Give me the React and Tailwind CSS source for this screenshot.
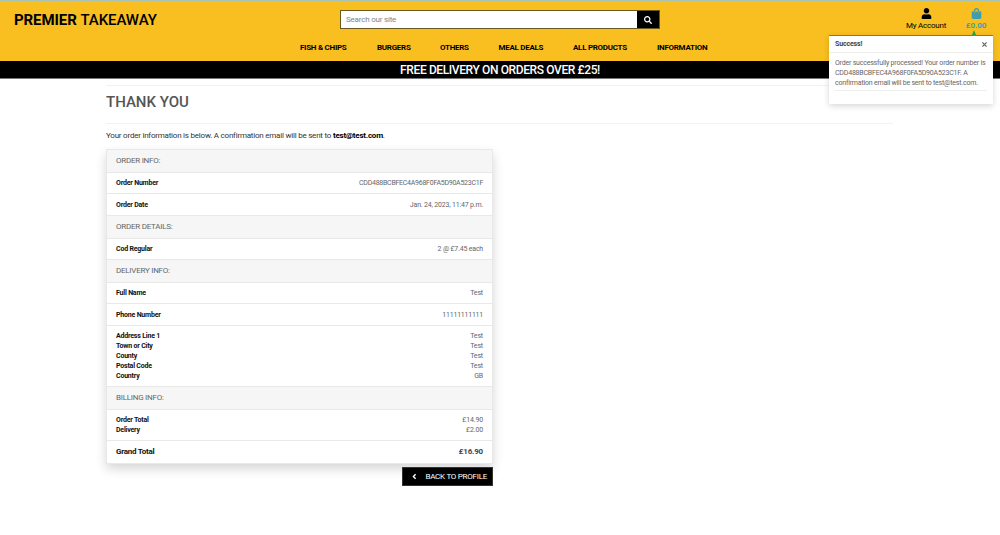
import React from "react";
import { FaUser, FaShoppingBag, FaSearch, FaChevronLeft } from "react-icons/fa";

const NAV = [
  ["FISH & CHIPS", "w-[77px]"],
  ["BURGERS", "w-[63px]"],
  ["OTHERS", "w-[58.5px]"],
  ["MEAL DEALS", "w-[74.5px]"],
  ["ALL PRODUCTS", "w-[84px]"],
  ["INFORMATION", "w-[50px]"],
];

function Header({ children }) {
  return (
    <div className="flex h-[23px] items-center border-b border-[#e8e8e8] bg-[#f6f6f6] px-[9px] text-[8px] tracking-[-0.25px] text-[#666]">
      {children}
    </div>
  );
}

function Rows({ items, className }) {
  return (
    <div className={`flex flex-col justify-center border-b border-[#e8e8e8] px-[9px] ${className}`}>
      {items.map(([label, value, tracking = "tracking-[-0.15px]"]) => (
        <div key={label} className="flex h-[9.9px] items-center justify-between text-[7px]">
          <span className="font-bold tracking-[-0.2px] text-[#111]">{label}</span>
          <span className={`text-[#666] ${tracking}`}>{value}</span>
        </div>
      ))}
    </div>
  );
}

export default function App() {
  return (
    <div className="relative h-[535px] w-[1000px] overflow-hidden whitespace-nowrap bg-white font-['Roboto',sans-serif] text-black">
      <header className="h-[61px] border-t border-[#a9c3b4] bg-[#f9bf20]">
        <div className="flex h-[34px] items-start">
          <div className="w-[340px] pl-[14px] pt-[10px] text-[15px] leading-[18px] tracking-[-0.08px]">
            <span className="font-bold">PREMIER</span> <span className="font-medium">TAKEAWAY</span>
          </div>
          <div className="mt-[9px] flex h-[19px] w-[320px] border border-[#6b5a20]">
            <div className="flex flex-1 items-center bg-white pl-[5px] text-[8px] tracking-[-0.2px] text-[#7d858c]">Search our site</div>
            <div className="flex w-[22px] items-center justify-center bg-black text-white">
              <FaSearch size={8} />
            </div>
          </div>
          <div className="ml-auto flex pt-[7px] text-[8px] tracking-[-0.22px]">
            <div className="flex w-[60px] flex-col items-center">
              <FaUser size={11} />
              <span className="mt-[1px] leading-[11px]">My Account</span>
            </div>
            <div className="mr-[4px] flex w-[40px] flex-col items-center text-[#3a9fb5]">
              <FaShoppingBag size={11} />
              <span className="mt-[1px] font-bold leading-[11px] tracking-[-0.1px]">£0.00</span>
            </div>
          </div>
        </div>
        <nav className="ml-[300px] flex h-[26px] items-center text-[8px] font-bold tracking-[-0.28px]">
          {NAV.map(([label, width]) => (
            <span key={label} className={`shrink-0 ${width}`}>{label}</span>
          ))}
        </nav>
      </header>
      <div className="flex h-[18px] items-center justify-center border-b border-[#777] bg-black text-[12px] font-medium leading-[16px] tracking-[-0.38px] text-white">
        FREE DELIVERY ON ORDERS OVER £25!
      </div>
      <main className="ml-[106px] w-[787px] pt-[6px]">
        <div className="flex h-[39px] items-center border-y border-[#f2f2f2] pb-[4px] text-[15px] font-medium text-[#555]">
          THANK YOU
        </div>
        <p className="mt-[6px] h-[12px] text-[8px] leading-[12px] tracking-[-0.22px] text-[#333]">
          Your order information is below. A confirmation email will be sent to <b className="text-black">test@test.com</b>.
        </p>
        <section className="mt-[7px] w-[387px] border-x border-t border-[#e8e8e8] shadow-[0_5px_10px_rgba(0,0,0,0.16)]">
          <Header>ORDER INFO:</Header>
          <Rows className="h-[21px] pt-[1px]" items={[["Order Number", "CDD488BCBFEC4A968F0FA5D90A523C1F", "tracking-[-0.26px]"]]} />
          <Rows className="h-[22px] pt-[1px]" items={[["Order Date", "Jan. 24, 2023, 11:47 p.m.", "tracking-[-0.19px]"]]} />
          <Header>ORDER DETAILS:</Header>
          <Rows className="h-[21px] pt-[1px]" items={[["Cod Regular", "2 @ £7.45 each", "tracking-[-0.2px]"]]} />
          <Header>DELIVERY INFO:</Header>
          <Rows className="h-[21px] pt-[1px]" items={[["Full Name", "Test"]]} />
          <Rows className="h-[22px] pt-[1px]" items={[["Phone Number", "11111111111", "tracking-[-0.24px]"]]} />
          <Rows
            className="h-[61px]"
            items={[["Address Line 1", "Test"], ["Town or City", "Test"], ["County", "Test"], ["Postal Code", "Test"], ["Country", "GB"]]}
          />
          <Header>BILLING INFO:</Header>
          <Rows className="h-[31px]" items={[["Order Total", "£14.90"], ["Delivery", "£2.00"]]} />
          <div className="flex h-[23px] items-center justify-between border-b border-[#e8e8e8] px-[9px] text-[8px] font-bold">
            <span className="tracking-[-0.25px] text-[#111]">Grand Total</span>
            <span className="tracking-[-0.2px] text-[#444]">£16.90</span>
          </div>
        </section>
        <button className="ml-[296px] mt-[3px] flex h-[19px] w-[91px] items-center justify-between border border-[#333] bg-black pl-[8px] pr-[5px] text-[8px] tracking-[-0.25px] text-white">
          <svg className="h-[7px] w-[7px]" viewBox="0 0 7 7" fill="none" stroke="currentColor" strokeWidth="1.4">
            <path d="M4.6 1.2L2.4 3.5l2.2 2.3" />
          </svg>
          <span>BACK TO PROFILE</span>
        </button>
      </main>
      <div className="absolute left-[829px] top-[30px] w-[164px]">
        <div className="ml-[143px] h-0 w-0 border-x-[2.5px] border-b-[5px] border-x-transparent border-b-[#28a745]" />
        <div className="h-[69px] border-t border-[#28a745] bg-white px-[6px] text-[#666] shadow-[0_2px_6px_rgba(0,0,0,0.16)]">
          <div className="-mx-[6px] flex h-[17px] items-center justify-between border-b border-[#f0eee8] px-[6px]">
            <span className="text-[7px] font-bold tracking-[-0.15px] text-[#444]">Success!</span>
            <svg className="h-[5px] w-[5px]" viewBox="0 0 5 5" fill="none" stroke="#666" strokeWidth="1.2">
              <path d="M.4.4l4.2 4.2M4.6.4L.4 4.6" />
            </svg>
          </div>
          <div className="mt-[5px] h-[33px] border-b border-[#eee] text-[7px] leading-[10px] tracking-[-0.2px]">
            Order successfully processed! Your order number is
            <br />
            CDD488BCBFEC4A968F0FA5D90A523C1F. A
            <br />
            confirmation email will be sent to test@test.com.
          </div>
        </div>
      </div>
    </div>
  );
}
